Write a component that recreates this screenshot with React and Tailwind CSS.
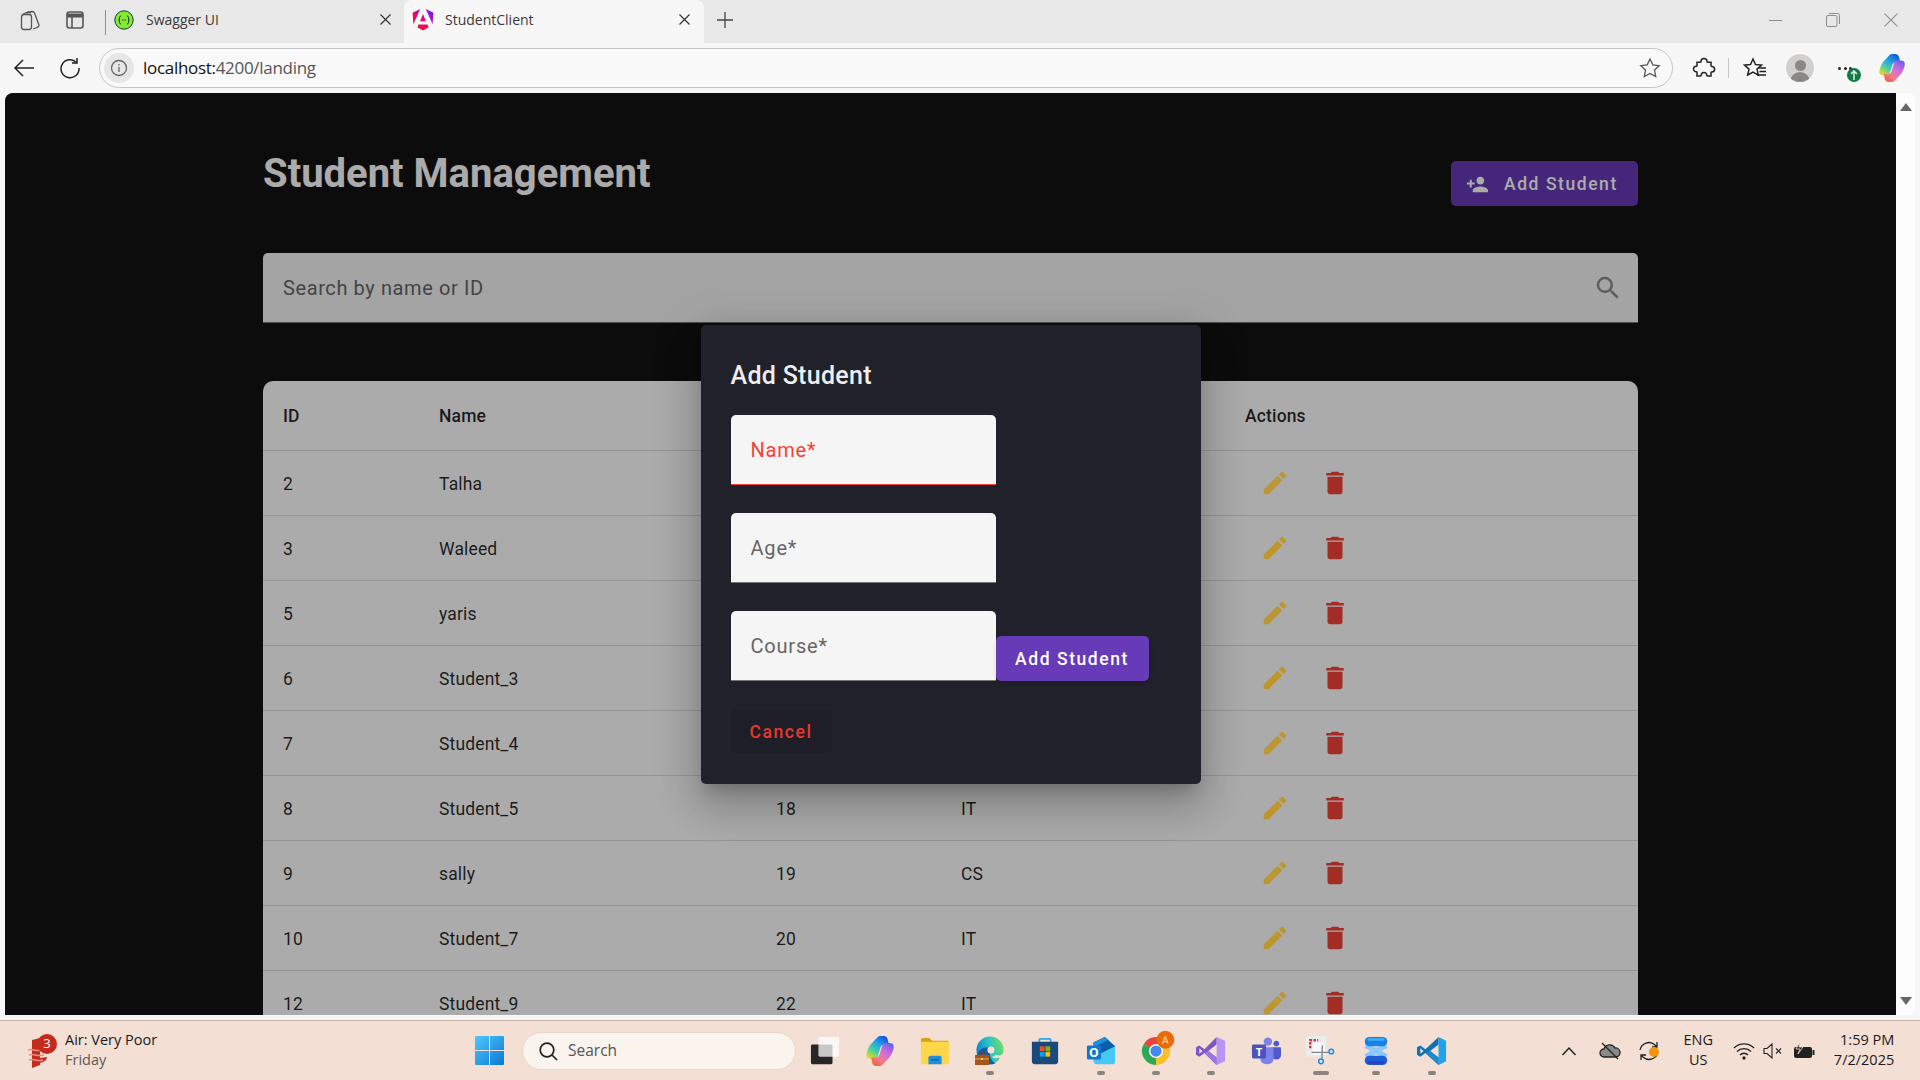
import { MdDelete, MdEdit, MdPersonAdd, MdSearch } from "react-icons/md";

// age and course are only known where the dialog does not cover them
const STUDENTS = [
  { id: 2, name: "Talha" },
  { id: 3, name: "Waleed" },
  { id: 5, name: "yaris" },
  { id: 6, name: "Student_3" },
  { id: 7, name: "Student_4" },
  { id: 8, name: "Student_5", age: 18, course: "IT" },
  { id: 9, name: "sally", age: 19, course: "CS" },
  { id: 10, name: "Student_7", age: 20, course: "IT" },
  { id: 12, name: "Student_9", age: 22, course: "IT" },
];

const ROW = "grid grid-cols-[156px_337px_185px_284px_413px] items-center border-b border-[#e0e0e0] text-[17.5px] tracking-[0.15px] text-black/85";
const CELL = "px-[20px] pt-[2px]";

/* browser chrome icons */
function CollectionsIcon() {
  return (
    <svg width="24" height="24" viewBox="0 0 24 24" fill="none" stroke="#555" strokeWidth="1.3">
      <path d="M8 5 L14 3.500 Q16 3.500 16.500 5 L21 17 Q21 19 19 19.500 L15 21" />
      <path d="M5 6 L10 4 Q12 3.500 12.500 5.500" />
      <rect x="3.500" y="6.500" width="10" height="15" rx="2.500" fill="#e8e8e8" />
    </svg>
  );
}

function TabLayoutIcon() {
  return (
    <svg width="22" height="22" viewBox="0 0 22 22" fill="none" stroke="#555" strokeWidth="1.6">
      <rect x="3" y="3" width="16" height="16" rx="2.500" />
      <path d="M3 6.500h16" strokeWidth="4" />
      <path d="M8 8v11" />
    </svg>
  );
}

function SwaggerIcon() {
  return (
    <svg width="20" height="20" viewBox="0 0 20 20" fill="none">
      <circle cx="10" cy="10" r="9.200" fill="#85ea2d" stroke="#173647" strokeWidth="1" />
      <path d="M7 6 Q5.500 6 5.500 7.500 V9 Q5.500 10 4.600 10 Q5.500 10 5.500 11 V12.500 Q5.500 14 7 14 M13 6 Q14.500 6 14.500 7.500 V9 Q14.500 10 15.400 10 Q14.500 10 14.500 11 V12.500 Q14.500 14 13 14" stroke="#173647" strokeWidth="1" />
      <path d="M8 10h.9M9.600 10h.9M11.200 10h.9" stroke="#173647" strokeWidth="1.100" />
    </svg>
  );
}

function AngularIcon() {
  return (
    <svg width="22" height="24" viewBox="-1 -1 22 24">
      <defs>
        <linearGradient id="ng" x1="0.1" y1="1" x2="0.9" y2="0">
          <stop offset="0" stopColor="#e40035" />
          <stop offset="0.3" stopColor="#f60a48" />
          <stop offset="0.55" stopColor="#dc087d" />
          <stop offset="0.8" stopColor="#9717e7" />
          <stop offset="1" stopColor="#6c00f5" />
        </linearGradient>
      </defs>
      <path fill="url(#ng)" d="M20.400 3.700l-.8 11.500L12.800 0zM15.600 18.300L10 21.600l-5.600-3.300 1.100-2.700h9zM10 5l2.900 7.200H7.100zM.4 15.200L-.4 3.700 7.200 0z" />
    </svg>
  );
}

function CloseGlyph({ size = 13 }) {
  return (
    <svg width={size} height={size} viewBox="0 0 13 13" stroke="#333" strokeWidth="1.200">
      <path d="M1.500 1.500l10 10M11.500 1.500l-10 10" />
    </svg>
  );
}

function CopilotIcon({ size = 30 }) {
  const band = "M13 1.500Q14.500 0 16.500 0H20Q23 0 24 3L25.500 9H20Q17.500 9 16.500 12L13.500 22Q12.500 24.500 10 24.500H6Q.5 24.500 1.500 19Q2.500 14 5.500 9.500z";
  return (
    <svg width={size} height={size} viewBox="0 0 32 32">
      <defs>
        <linearGradient id="cpA" x1="0.8" y1="0" x2="0.15" y2="1">
          <stop offset="0" stopColor="#1550d8" />
          <stop offset="0.35" stopColor="#20a0e8" />
          <stop offset="0.65" stopColor="#45d0a8" />
          <stop offset="0.85" stopColor="#a8d84a" />
          <stop offset="1" stopColor="#f2d43c" />
        </linearGradient>
        <linearGradient id="cpB" x1="0.8" y1="0" x2="0.15" y2="1">
          <stop offset="0" stopColor="#f5603c" />
          <stop offset="0.3" stopColor="#f27a98" />
          <stop offset="0.65" stopColor="#c86be0" />
          <stop offset="1" stopColor="#6a5cf0" />
        </linearGradient>
      </defs>
      <path fill="url(#cpA)" d={band} />
      <path fill="url(#cpB)" d={band} transform="rotate(180 16 16)" />
    </svg>
  );
}

function TabStrip() {
  return (
    <div className="flex h-[43px] items-stretch bg-[#e8e8e8] font-['Open_Sans',sans-serif] text-[14px] text-[#3a3a3a]">
      <div className="ml-[18px] flex items-center pb-[4px]">
        <CollectionsIcon />
      </div>
      <div className="ml-[22px] flex items-center pb-[4px]">
        <TabLayoutIcon />
      </div>
      <div className="ml-[19px] mb-[8px] mt-[10px] w-px bg-[#8f8f8f]" />
      <div className="flex w-[298px] items-center pb-[4px] pl-[8px]">
        <SwaggerIcon />
        <span className="ml-[12px]">Swagger UI</span>
        <span className="ml-auto mr-[12px] flex">
          <CloseGlyph />
        </span>
      </div>
      <div className="flex w-[300px] items-center rounded-t-lg bg-[#f7f7f7] pb-[4px] pl-[8px]">
        <AngularIcon />
        <span className="ml-[11px]">StudentClient</span>
        <span className="ml-auto mr-[13px] flex">
          <CloseGlyph />
        </span>
      </div>
      <div className="ml-[12px] flex items-center pb-[4px]">
        <svg width="18" height="18" viewBox="0 0 18 18" stroke="#444" strokeWidth="1.300">
          <path d="M9 1v16M1 9h16" />
        </svg>
      </div>
      <div className="ml-auto flex pb-[3px]">
        <div className="flex w-[57px] items-center justify-center">
          <div className="h-px w-[13px] bg-[#8c8c8c]" />
        </div>
        <div className="flex w-[58px] items-center justify-center">
          <svg width="14" height="14" viewBox="0 0 14 14" fill="none" stroke="#8c8c8c">
            <rect x="0.500" y="2.500" width="10.500" height="11" rx="1.500" />
            <path d="M3 .5h8.500q2 0 2 2V11" />
          </svg>
        </div>
        <div className="flex w-[58px] items-center justify-center">
          <svg width="14" height="14" viewBox="0 0 13 13" stroke="#8c8c8c">
            <path d="M.5.5l12 12M12.500.5l-12 12" />
          </svg>
        </div>
      </div>
    </div>
  );
}

function Toolbar() {
  return (
    <div className="flex h-[50px] items-center bg-[#f7f7f7]">
      <svg className="ml-[12px]" width="24" height="24" viewBox="0 0 24 24" fill="none" stroke="#222" strokeWidth="1.500">
        <path d="M22 12H3M11 4l-8 8 8 8" />
      </svg>
      <svg className="ml-[22px]" width="24" height="24" viewBox="0 0 24 24" fill="none" stroke="#222" strokeWidth="1.500">
        <path d="M18.500 6.500A9 9 0 1 0 21 12" />
        <path d="M19 2v5h-5" />
      </svg>
      <div className="ml-[17px] flex h-[40px] w-[1574px] items-center rounded-full border border-[#c6c6c6] bg-[#f9f9f9] pl-[4px] font-['Open_Sans',sans-serif] text-[17px]">
        <div className="flex h-[30px] w-[30px] items-center justify-center rounded-full bg-[#e6e6e6]">
          <svg width="18" height="18" viewBox="0 0 18 18" fill="none" stroke="#666" strokeWidth="1.300">
            <circle cx="9" cy="9" r="7.500" />
            <path d="M9 8v5M9 5v1.500" />
          </svg>
        </div>
        <span className="ml-[9px] tracking-[-0.3px] text-[#111]">localhost:</span>
        <span className="tracking-[-0.3px] text-[#555]">4200/landing</span>
        <svg className="ml-auto mr-[11px]" width="22" height="22" viewBox="0 0 22 22" fill="none" stroke="#555" strokeWidth="1.300">
          <path d="M11 2l2.800 5.900 6.400.8-4.700 4.400 1.200 6.400-5.700-3.100-5.700 3.100 1.200-6.400L1.800 8.700l6.400-.8z" />
        </svg>
      </div>
      <svg className="ml-[19px]" width="24" height="24" viewBox="0 0 24 24" fill="none" stroke="#222" strokeWidth="1.500">
        <path d="M9 5.500a3 3 0 0 1 6 0c0 .5.3.8.8.8H19v3.500c0 .5.300.7.800.7a2.800 2.800 0 0 1 0 5.600c-.5 0-.8.2-.8.700V20h-3.500c-.5 0-.7-.3-.7-.7a2.800 2.800 0 0 0-5.600 0c0 .4-.2.7-.7.700H5v-3.500c0-.5-.3-.7-.7-.7a2.800 2.800 0 0 1 0-5.600c.4 0 .7-.3.700-.8V6.300h3.200c.5 0 .8-.3.800-.8z" />
      </svg>
      <div className="ml-[12px] h-[20px] w-px bg-[#c6c6c6]" />
      <svg className="ml-[13px]" width="26" height="24" viewBox="0 0 26 24" fill="none" stroke="#222" strokeWidth="1.500">
        <path d="M11 3l2.500 5.500 6 .6-4.500 4 1.300 6-5.300-3.100L5.700 19 7 13.100 2.500 9.100l6-.6z" />
        <path d="M17 12h7M17.500 15.500h6.500M15 19h9" />
      </svg>
      <div className="ml-[18px] flex h-[28px] w-[28px] flex-col items-center justify-end overflow-hidden rounded-full bg-[#d2d0ce]">
        <div className="mb-[1px] h-[11px] w-[11px] rounded-full bg-[#8a8886]" />
        <div className="h-[10px] w-[20px] rounded-t-full bg-[#8a8886]" />
      </div>
      <div className="relative ml-[22px] flex w-[18px] justify-center gap-[2.500px]">
        <div className="h-[3px] w-[3px] rounded-full bg-[#222]" />
        <div className="h-[3px] w-[3px] rounded-full bg-[#222]" />
        <div className="h-[3px] w-[3px] rounded-full bg-[#222]" />
        <div className="absolute left-[11px] top-[1px] flex h-[14px] w-[14px] items-center justify-center rounded-full bg-[#107c41]">
          <svg width="8" height="10" viewBox="0 0 8 10" fill="none" stroke="#fff" strokeWidth="1.300">
            <path d="M4 10V1M1 4l3-3 3 3" />
          </svg>
        </div>
      </div>
      <div className="ml-[24px] flex">
        <CopilotIcon size={28} />
      </div>
    </div>
  );
}

/* taskbar icons */
function WeatherIcon() {
  return (
    <div className="relative h-[34px] w-[28px]">
      <svg className="absolute bottom-0 left-0" width="26" height="30" viewBox="0 0 26 30">
        <path d="M4 2l8-2v27l-8 3z" fill="#c42b1c" />
        <path d="M12 7c4 1 6 2 6 4l-6 1zM12 20l7-1c0 3-3 5-7 6z" fill="#c42b1c" />
        <path d="M0 12c4-2 8 2 14 0M1 17c5-2 8 2 15 0M1 22c5-2 8 2 14 0" stroke="#f08a80" strokeWidth="1.500" fill="none" />
      </svg>
      <div className="absolute left-[9px] top-0 flex h-[20px] w-[20px] items-center justify-center rounded-full bg-[#c42b1c] text-[13px] text-white">3</div>
    </div>
  );
}

function WindowsLogo() {
  return (
    <svg width="29" height="29" viewBox="0 0 29 29">
      <defs>
        <linearGradient id="winA" x1="0" y1="0" x2="1" y2="1">
          <stop offset="0" stopColor="#4fc8fb" />
          <stop offset="1" stopColor="#0b78d4" />
        </linearGradient>
      </defs>
      <path fill="url(#winA)" d="M1 0h13v14H0V1q0-1 1-1zM15 0h13q1 0 1 1v13H15zM0 15h14v14H1q-1 0-1-1zM15 15h14v13q0 1-1 1H15z" />
    </svg>
  );
}

const BAR = "#f3dfd3";

const TASK_ICONS = [
  {
    key: "taskview",
    svg: (
      <>
        <rect x="1" y="9" width="23" height="21" rx="1.500" fill="#262626" />
        <rect x="9" y="1" width="22" height="21" rx="1.500" fill="#fff" opacity="0.75" />
      </>
    ),
  },
  {
    key: "folder",
    svg: (
      <>
        <path d="M1 4q0-2 2-2h7l3 3h16q2 0 2 2v3H1z" fill="#d9a00f" />
        <path d="M1 6h30v22q0 2-2 2H3q-2 0-2-2z" fill="#ffd54a" />
        <path d="M9 30v-7q0-2 2-2h10q2 0 2 2v7z" fill="#1d8fdc" />
        <rect x="12" y="25" width="8" height="1" fill="#0b4f8a" />
      </>
    ),
  },
  {
    key: "edge",
    svg: (
      <>
        <defs>
          <linearGradient id="edgeA" x1="0" y1="0.6" x2="1" y2="0.4">
            <stop offset="0" stopColor="#0f7ed0" />
            <stop offset="0.5" stopColor="#2bc4c8" />
            <stop offset="1" stopColor="#6fdc60" />
          </linearGradient>
        </defs>
        <circle cx="16" cy="15" r="14.500" fill="url(#edgeA)" />
        <path d="M2 21Q5 12 13 12q3 0 6 3-5 3-2 9 2 4 5 5-3 1.500-6 1.500Q6 30 2 21z" fill="#0f5ea8" />
        <circle cx="17" cy="15" r="3.800" fill={BAR} />
        <path d="M31 15q0 6-5 8-6 2-8-1 3 0 4-2 8 3 9-5zM31 16Q31 26 22 29 26 26 26 23q4-2 5-7z" fill={BAR} />
        <rect x="0" y="20" width="15" height="11" rx="1" fill="#a3551a" />
        <path d="M5 20v-2h5v2" fill="none" stroke="#7c3f12" strokeWidth="1.200" />
        <rect x="0" y="24" width="15" height="1" fill="#f5b041" />
        <rect x="6.500" y="23.500" width="2" height="2" fill="#ffe08a" />
      </>
    ),
  },
  {
    key: "store",
    svg: (
      <>
        <path d="M10 7V4q0-1 1-1h10q1 0 1 1v3" fill="none" stroke="#28a8ea" strokeWidth="1.800" />
        <path d="M2 6h28v21q0 3-3 3H5q-3 0-3-3z" fill="#1a4a7c" />
        <rect x="10.500" y="11" width="5" height="5" fill="#f25022" />
        <rect x="16.500" y="11" width="5" height="5" fill="#7fba00" />
        <rect x="10.500" y="17" width="5" height="5" fill="#00a4ef" />
        <rect x="16.500" y="17" width="5" height="5" fill="#ffb900" />
      </>
    ),
  },
  {
    key: "outlook",
    svg: (
      <>
        <path d="M8 7l12-6 11 10v17q0 2-2 2H12q-4 0-4-4z" fill="#45c8f5" />
        <path d="M8 7l12-6 11 10-16 8-7-4z" fill="#0a5fa8" />
        <path d="M8 7l12-6 4 3-16 8z" fill="#1f8fe0" />
        <rect x="1" y="10" width="15" height="15" rx="1.500" fill="#0f78d4" />
        <text x="8.500" y="22" fontSize="13" fontWeight="700" fill="#fff" textAnchor="middle" fontFamily="Open Sans, sans-serif">O</text>
      </>
    ),
  },
  {
    key: "chrome",
    svg: (
      <>
        <path d="M16 16 3 8.500A15 15 0 0 1 29 8.500z" fill="#e8453c" />
        <path d="M16 16 29 8.500A15 15 0 0 1 16 31z" fill="#f9c02e" />
        <path d="M16 16 16 31A15 15 0 0 1 3 8.500z" fill="#2fa853" />
        <circle cx="16" cy="16" r="7.500" fill="#fff" />
        <circle cx="16" cy="16" r="6" fill="#4688f1" />
        <circle cx="26" cy="4" r="9.500" fill="#ea6a05" />
        <text x="26" y="8" fontSize="11" fill="#ffe0c4" textAnchor="middle" fontFamily="Open Sans, sans-serif">A</text>
      </>
    ),
  },
  {
    key: "vs",
    svg: (
      <>
        <path d="M22 1L9 14 3.500 10 0 12v8l3.500 2L9 18l13 13v-8l-9-7 9-7z" fill="#7a56c8" />
        <path d="M3.500 13v6L7 16z" fill={BAR} />
        <path d="M22 1l9 4v22l-9 4z" fill="#b994f2" />
        <path d="M22 31l-13-13 4-2 9 7z" fill="#9a78e0" />
      </>
    ),
  },
  {
    key: "teams",
    svg: (
      <>
        <circle cx="27" cy="8" r="3" fill="#5059c9" />
        <circle cx="18" cy="6" r="4.500" fill="#7b83eb" />
        <path d="M22 12h9q1 0 1 1v7q0 5-5 5-3 0-5-2z" fill="#5059c9" />
        <path d="M10 12h14v12q0 6-7 6-7 0-7-6z" fill="#7b83eb" />
        <rect x="1" y="9" width="15" height="15" rx="1.500" fill="#4b53bc" />
        <text x="8.500" y="21" fontSize="12" fontWeight="700" fill="#fff" textAnchor="middle" fontFamily="Open Sans, sans-serif">T</text>
      </>
    ),
  },
  {
    key: "snip",
    svg: (
      <>
        <rect x="0" y="0" width="22" height="22" rx="2" fill="#ebebeb" />
        <rect x="7" y="7" width="13" height="13" rx="1" fill="#f7f7f7" />
        <path d="M4.500 13V4.500H13" fill="none" stroke="#d13438" strokeWidth="2.500" strokeDasharray="2.500 1.500" />
        <path d="M6 17.500h18M17.500 10L17 24" fill="none" stroke="#7f868c" strokeWidth="1.500" />
        <circle cx="27" cy="16.500" r="2.500" fill="none" stroke="#1d8fdc" strokeWidth="1.600" />
        <circle cx="16" cy="27" r="2.500" fill="none" stroke="#1d8fdc" strokeWidth="1.600" />
      </>
    ),
  },
  {
    key: "azure",
    svg: (
      <>
        <path d="M5 10l22 12M27 10L5 22" stroke="#8cc8f8" strokeWidth="6" />
        <rect x="4" y="1" width="24" height="10" rx="5" fill="#1a80e8" />
        <rect x="7" y="2.500" width="18" height="2.500" rx="1.200" fill="#3fb0f5" />
        <rect x="4" y="21" width="24" height="10" rx="5" fill="#1c5ed8" />
        <rect x="7" y="27" width="18" height="2.500" rx="1.200" fill="#2a3fb8" />
      </>
    ),
  },
  {
    key: "vscode",
    svg: (
      <>
        <path d="M23 1L9 14 3.500 10 0 12v8l3.500 2L9 18l14 13v-8l-9-7 9-7z" fill="#0f72b8" />
        <path d="M3.500 13v6L7 16z" fill={BAR} />
        <path d="M23 1l8 4v22l-8 4z" fill="#22a0e8" />
        <path d="M23 31L9 18l4-2 10 7z" fill="#1a8ad4" />
      </>
    ),
  },
];

function TaskIcon({ children, underline }) {
  return (
    <div className="relative flex w-[55.200px] items-center justify-center">
      <svg className="overflow-visible" width="30" height="30" viewBox="0 0 32 32">
        {children}
      </svg>
      {underline && <div className={`absolute bottom-[5px] h-[4px] rounded-full bg-[#8a8480] ${underline}`} />}
    </div>
  );
}

function Taskbar() {
  const marks = { edge: "w-[8px]", outlook: "w-[8px]", chrome: "w-[8px]", vs: "w-[8px]", snip: "w-[16px]", azure: "w-[8px]", vscode: "w-[8px]" };
  return (
    <div className="flex h-[60px] items-stretch border-t border-[#c9b7ac] bg-[#f3dfd3] font-['Open_Sans',sans-serif] text-[14.500px] text-[#1b1b1b]">
      <div className="ml-[28px] flex items-center">
        <WeatherIcon />
      </div>
      <div className="ml-[9px] flex w-[410px] flex-col justify-center pb-[2px] leading-[20px]">
        <span>Air: Very Poor</span>
        <span className="text-[#5e5a57]">Friday</span>
      </div>
      <div className="flex items-center">
        <WindowsLogo />
      </div>
      <div className="ml-[18px] mr-[1px] flex h-[38px] w-[274px] items-center self-center rounded-full border border-[#ead8cc] bg-[#faf3ee] pl-[15px]">
        <svg width="20" height="20" viewBox="0 0 20 20" fill="none" stroke="#222" strokeWidth="1.700">
          <circle cx="9" cy="9" r="6.800" />
          <path d="M14 14l5 5" />
        </svg>
        <span className="ml-[10px] text-[15.500px] text-[#555]">Search</span>
      </div>
      {TASK_ICONS.slice(0, 1).map((t) => (
        <TaskIcon key={t.key}>{t.svg}</TaskIcon>
      ))}
      <div className="flex w-[55.200px] items-center justify-center">
        <CopilotIcon size={30} />
      </div>
      {TASK_ICONS.slice(1).map((t) => (
        <TaskIcon key={t.key} underline={marks[t.key]}>
          {t.svg}
        </TaskIcon>
      ))}
      <div className="ml-[102px] flex items-center">
        <svg width="16" height="10" viewBox="0 0 16 10" fill="none" stroke="#222" strokeWidth="1.500">
          <path d="M1.500 9L8 2l6.500 7" />
        </svg>
      </div>
      <div className="ml-[22px] flex items-center">
        <svg width="22" height="18" viewBox="0 0 22 18" fill="#8a8a8a" stroke="#222" strokeWidth="1.300">
          <path d="M5 15a4 4 0 0 1 0-8 6 6 0 0 1 11-1 4.500 4.500 0 0 1 1 9z" />
          <path d="M3 1l16 16" />
        </svg>
      </div>
      <div className="relative ml-[18px] flex w-[22px] items-center">
        <svg width="20" height="20" viewBox="0 0 20 20" fill="none" stroke="#222" strokeWidth="1.300">
          <path d="M1 9a9 9 0 0 1 15-5l2 2M18 1v5h-5M19 11a9 9 0 0 1-15 5l-2-2M2 19v-5h5" />
        </svg>
        <div className="absolute left-[10px] top-[26px] h-[10px] w-[10px] rounded-full bg-[#f7930e]" />
      </div>
      <div className="ml-[21px] flex w-[32px] flex-col items-center justify-center pb-[2px] leading-[20px]">
        <span>ENG</span>
        <span>US</span>
      </div>
      <div className="ml-[19px] flex items-center">
        <svg width="22" height="18" viewBox="0 0 22 18" fill="none" stroke="#222" strokeWidth="1.300">
          <path d="M1 6a14 14 0 0 1 20 0M4 9.500a10 10 0 0 1 14 0M7 13a5.500 5.500 0 0 1 8 0" />
          <circle cx="11" cy="16" r="1" fill="#222" />
        </svg>
      </div>
      <div className="ml-[8px] flex items-center">
        <svg width="20" height="16" viewBox="0 0 20 16" fill="none" stroke="#222" strokeWidth="1.100">
          <path d="M1 5.500h3L9 1v14l-5-4.500H1zM13 5.500l5 5M18 5.500l-5 5" />
        </svg>
      </div>
      <div className="ml-[10px] flex items-center">
        <svg width="22" height="18" viewBox="0 0 22 18">
          <rect x="1" y="5" width="18" height="11" rx="2" fill="#222" />
          <rect x="19.500" y="8" width="2" height="5" fill="#222" />
          <path d="M7 0L3 7h4l-2 5 5-7H6z" fill="#222" stroke="#f3dfd3" strokeWidth="0.800" />
        </svg>
      </div>
      <div className="ml-[5px] flex w-[74px] flex-col items-end justify-center pb-[2px] leading-[20px]">
        <span>1:59 PM</span>
        <span>7/2/2025</span>
      </div>
    </div>
  );
}

/* the angular page */
function StudentTable() {
  return (
    <div className="overflow-hidden rounded-[10px] bg-white">
      <div className={`${ROW} h-[70px] font-medium`}>
        <div className={CELL}>ID</div>
        <div className={CELL}>Name</div>
        <div className={CELL} />
        <div className={CELL} />
        <div className={CELL}>Actions</div>
      </div>
      {STUDENTS.map((s) => (
        <div key={s.id} className={`${ROW} h-[65px]`}>
          <div className={CELL}>{s.id}</div>
          <div className={CELL}>{s.name}</div>
          <div className={CELL}>{s.age}</div>
          <div className={CELL}>{s.course}</div>
          <div className="flex px-[20px]">
            <div className="flex w-[60px] justify-center">
              {/* sits over the backdrop: this gold stays brighter than the dimming allows */}
              <MdEdit size={30} className="relative z-10 text-[#bd962f]" />
            </div>
            <div className="flex w-[60px] justify-center">
              <MdDelete size={30} className="text-[#f44336]" />
            </div>
          </div>
        </div>
      ))}
    </div>
  );
}

function DialogField({ label, error }) {
  return (
    <div className={`flex h-[70px] w-[265px] items-center rounded-t-[5px] border-b bg-[#f5f5f5] px-[20px] pt-[2px] text-[20px] tracking-[0.8px] ${error ? "border-[#f44336] text-[#f44336]" : "border-[#757575] text-[#666]"}`}>
      {label}
    </div>
  );
}

function AddStudentDialog() {
  return (
    <div className="flex w-[500px] flex-col rounded-[5px] bg-[#20212b] px-[30px] pb-[31px] pt-[34px] shadow-[0_11px_15px_-7px_rgba(0,0,0,0.2),0_24px_38px_3px_rgba(0,0,0,0.14),0_9px_46px_8px_rgba(0,0,0,0.12)]">
      <h2 className="text-[25px] font-medium leading-[34px] tracking-[0.3px] text-[#eeeeee]">Add Student</h2>
      <div className="mt-[22px] flex flex-col gap-[28px]">
        <DialogField label="Name*" error />
        <DialogField label="Age*" />
        <div className="flex items-end">
          <DialogField label="Course*" />
          <button className="h-[45px] w-[153px] rounded-[5px] bg-[#673ab7] pt-[2px] text-[17.500px] font-medium tracking-[1.560px] text-white shadow-md">
            Add Student
          </button>
        </div>
      </div>
      <button className="mt-[29px] h-[43px] w-[101px] rounded-[5px] bg-[#1e1e28] pt-[2px] text-[17.500px] font-medium tracking-[1.560px] text-[#e5392d]">
        Cancel
      </button>
    </div>
  );
}

function Page() {
  return (
    <div className="relative flex-1 overflow-hidden rounded-tl-lg bg-[#121212] font-['Roboto',sans-serif]">
      <div className="mx-auto w-[1375px] pt-[68px]">
        <div className="flex items-start justify-between">
          <h1 className="mt-[-1px] flex h-[28px] items-center text-[40px] font-bold text-white">Student Management</h1>
          <button className="flex h-[45px] w-[187px] items-center rounded-[5px] bg-[#673ab7] pl-[15px] pt-[1px] text-[17.500px] font-medium tracking-[1.560px] text-white">
            <MdPersonAdd size={23} />
            <span className="ml-[15px]">Add Student</span>
          </button>
        </div>
        <div className="mt-[47px] flex h-[70px] items-center justify-between rounded-t-[5px] border-b border-[#757575] bg-[#f5f5f5] pl-[20px] pr-[15px] pt-[1px] text-[20px] tracking-[0.6px] text-[#666]">
          <span>Search by name or ID</span>
          <MdSearch size={30} className="text-[#8a8a8a]" />
        </div>
        <div className="mt-[58px]">
          <StudentTable />
        </div>
      </div>
      <div className="absolute inset-0 flex items-center justify-center bg-black/[0.33]">
        <AddStudentDialog />
      </div>
    </div>
  );
}

function Scrollbar() {
  return (
    <div className="flex w-[19px] flex-col items-center justify-between rounded-r-md bg-[#fdfdfd] py-[10px]">
      <div className="h-0 w-0 border-x-[6px] border-b-[8px] border-x-transparent border-b-[#666]" />
      <div className="h-0 w-0 border-x-[6px] border-t-[8px] border-x-transparent border-t-[#666]" />
    </div>
  );
}

export default function App() {
  return (
    <div className="flex h-screen w-screen flex-col overflow-hidden bg-[#f7f7f7]">
      <TabStrip />
      <Toolbar />
      <div className="flex min-h-0 flex-1 pb-[5px] pl-[5px] pr-[5px]">
        <Page />
        <Scrollbar />
      </div>
      <Taskbar />
    </div>
  );
}
